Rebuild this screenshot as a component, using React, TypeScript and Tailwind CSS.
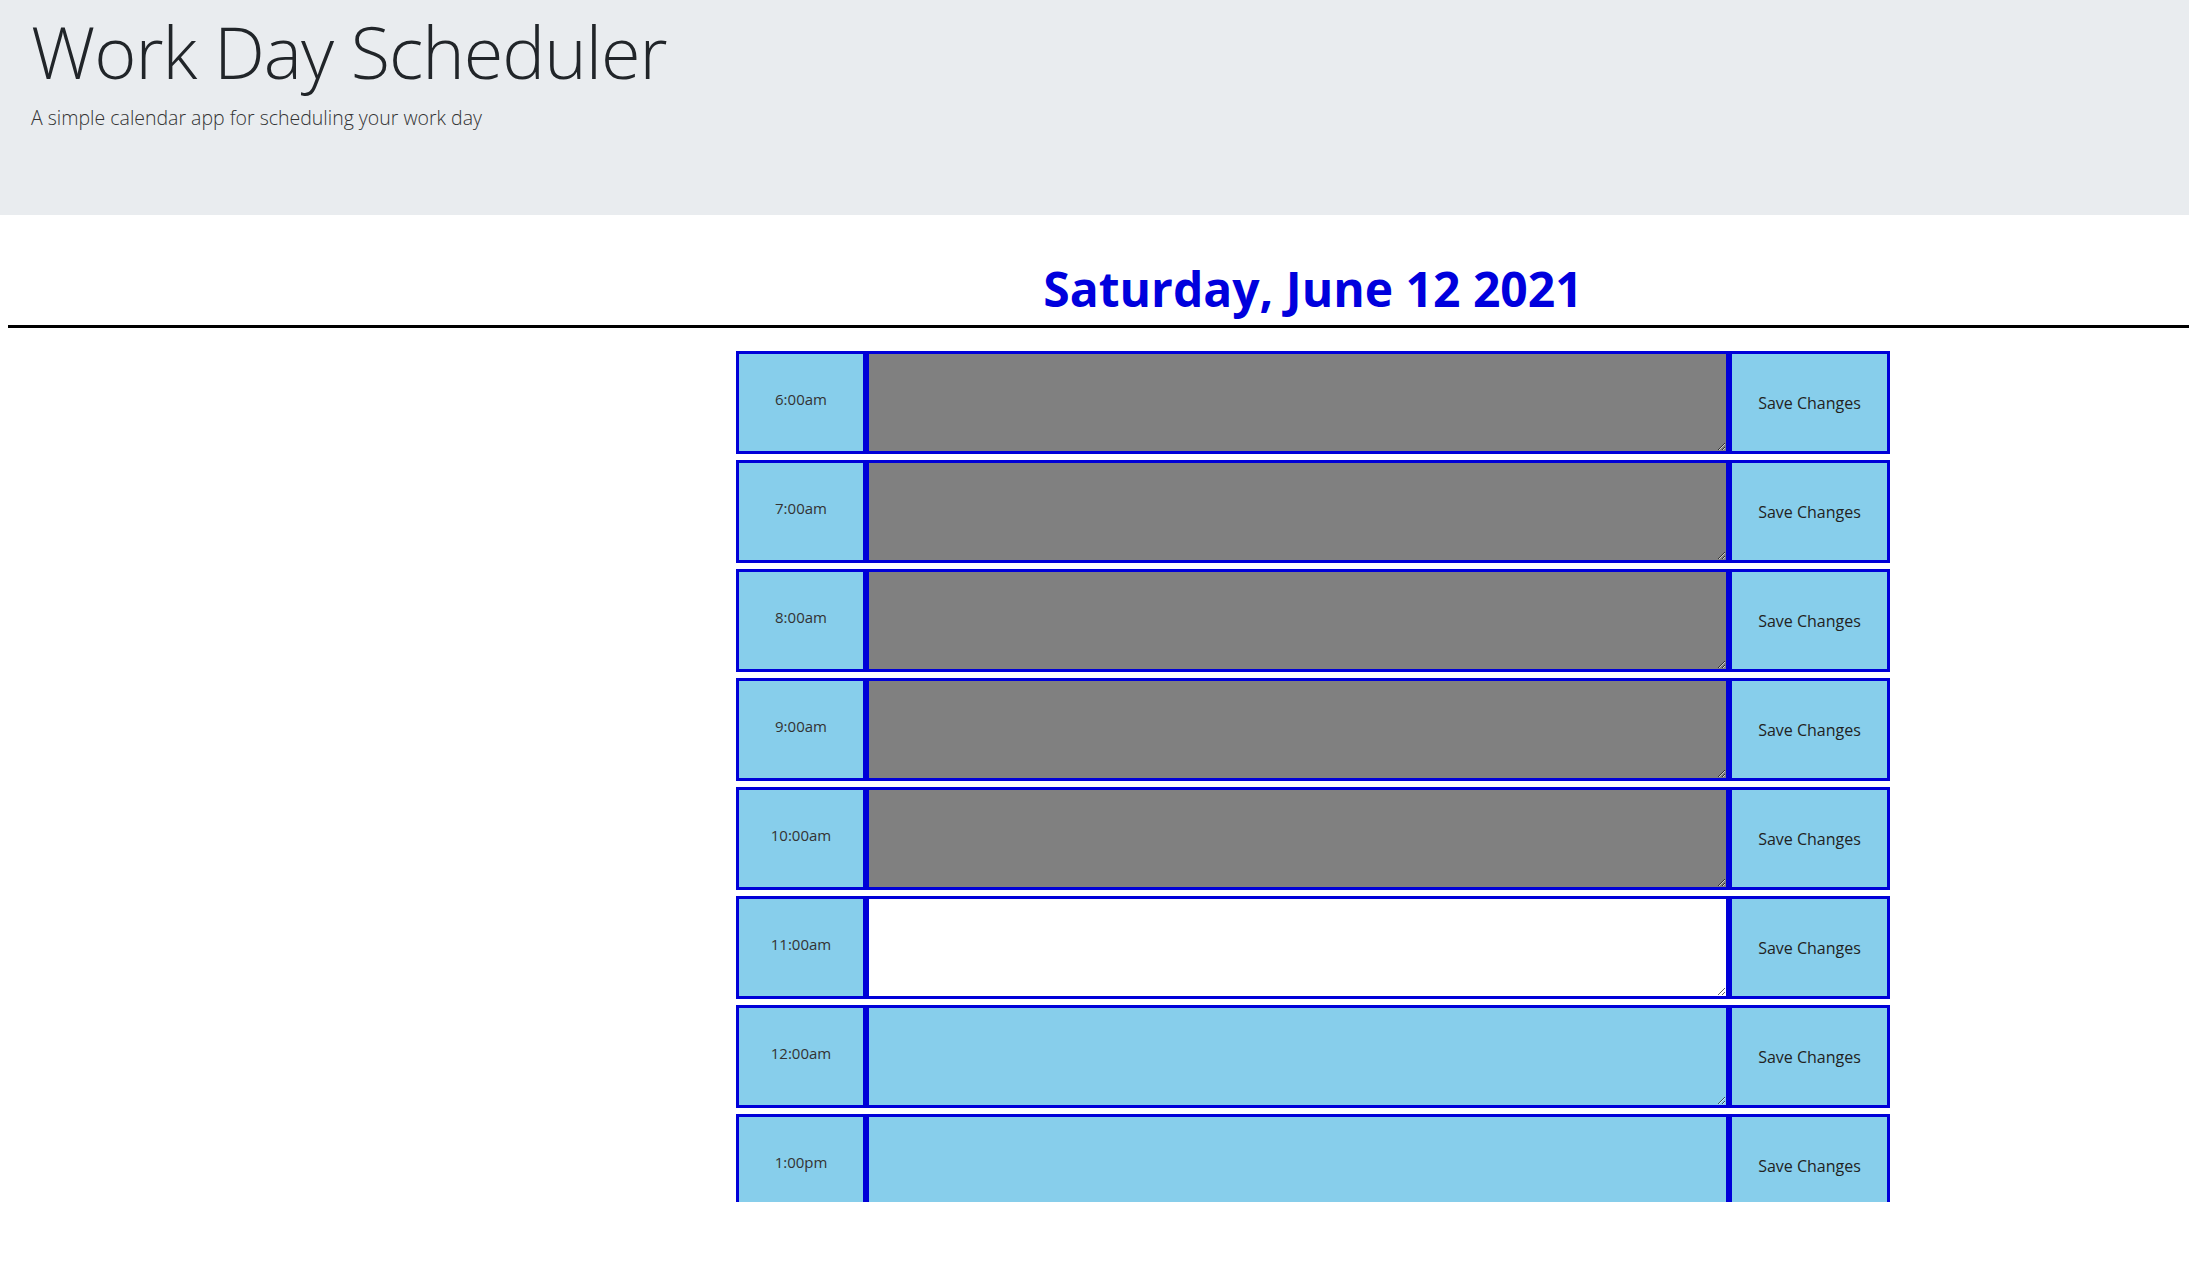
import React from 'react';

type Slot = { label: string; state: 'past' | 'present' | 'future' };

const slots: Slot[] = [
    { label: '6:00am', state: 'past' },
    { label: '7:00am', state: 'past' },
    { label: '8:00am', state: 'past' },
    { label: '9:00am', state: 'past' },
    { label: '10:00am', state: 'past' },
    { label: '11:00am', state: 'present' },
    { label: '12:00am', state: 'future' },
    { label: '1:00pm', state: 'future' },
];

const areaColor = {
    past: 'bg-[#808080]',
    present: 'bg-white',
    future: 'bg-[#87ceeb]',
};

function TimeRow({ slot }: { slot: Slot }) {
    return (
        <div className="flex h-[103px] shrink-0">
            <div className="w-[130px] border-[3px] border-[#0000d8] bg-[#87ceeb] flex items-center justify-center pb-[6px] text-[15px] text-[#333]">
                {slot.label}
            </div>
            <textarea
                className={`flex-1 border-[3px] border-[#0000d8] ${areaColor[slot.state]} p-2 text-[15px] outline-none`}
            />
            <button className="w-[161px] border-[3px] border-[#0000d8] bg-[#87ceeb] flex items-center justify-center text-[16px] text-[#222]">
                Save Changes
            </button>
        </div>
    );
}

export default function App() {
    return (
        <div className="min-h-screen bg-white font-['Open_Sans',sans-serif]">
            <header className="h-[215px] bg-[#e9ecef] pl-[31px] pt-[8px]">
                <h1 className="text-[72px] font-light leading-[1.2] text-[#212529] tracking-[-1px]">
                    Work Day Scheduler
                </h1>
                <p className="mt-[9px] text-[19.5px] font-light text-[#333]">
                    A simple calendar app for scheduling your work day
                </p>
            </header>

            <div className="ml-[736px] w-[1154px] pt-[50px] text-center">
                <h2 className="text-[48px] font-bold leading-none text-[#0000dd]">
                    Saturday, June 12 2021
                </h2>
            </div>
            <hr className="ml-[8px] mt-[12px] border-t-[3px] border-black" />

            <div className="ml-[736px] w-[1154px] mt-[23px] h-[851px] overflow-hidden flex flex-col gap-[6px]">
                {slots.map(slot => (
                    <TimeRow key={slot.label} slot={slot} />
                ))}
            </div>
        </div>
    );
}
